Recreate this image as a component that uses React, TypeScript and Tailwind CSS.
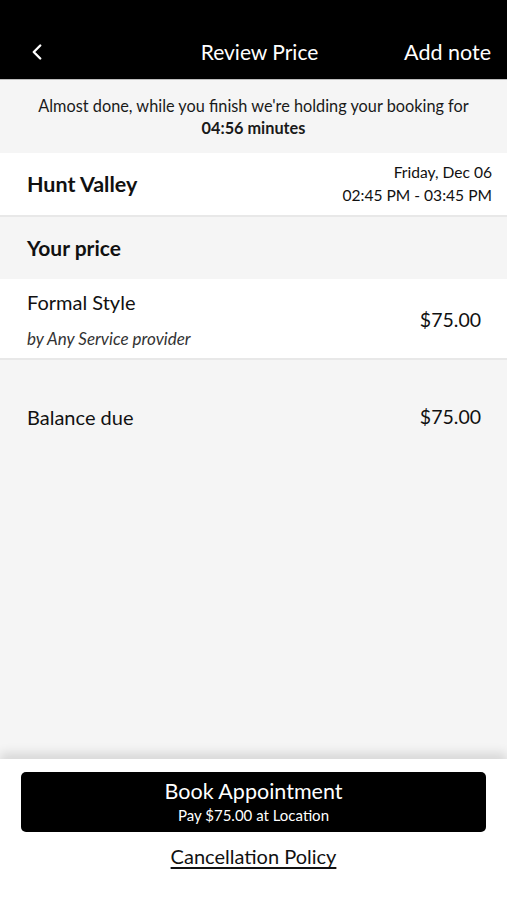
import { ChevronLeft } from "lucide-react";

const font = { fontFamily: "Lato, 'Noto Sans', sans-serif" };

export default function App() {
  return (
    <div style={font} className="w-[507px] h-[900px] flex flex-col bg-[#f5f5f5] text-[#111] overflow-hidden">
      <header className="h-[80px] bg-black text-white flex items-end pb-[14px] px-[28px] border-b border-[#bdbdbd] shrink-0">
        <div className="w-[100px]">
          <ChevronLeft className="size-[26px] -ml-[4px]" strokeWidth={2.2} />
        </div>
        <div className="flex-1 text-center text-[21px] leading-[26px]">Review Price</div>
        <div className="w-[100px] text-right text-[21.5px] leading-[26px] -mr-[12px]">Add note</div>
      </header>

      <div className="h-[73px] flex flex-col items-center justify-center text-[16.3px] leading-[22px] text-[#1a1a1a]">
        <p>Almost done, while you finish we're holding your booking for</p>
        <p className="font-bold">04:56 minutes</p>
      </div>

      <div className="h-[64px] bg-white flex items-center justify-between pl-[27px] pr-[15px] border-b-2 border-[#e8e8e8]">
        <span className="text-[21.5px] font-bold">Hunt Valley</span>
        <div className="text-right text-[15.6px] leading-[23px]">
          <p>Friday, Dec 06</p>
          <p>02:45 PM - 03:45 PM</p>
        </div>
      </div>

      <div className="h-[62px] flex items-center px-[27px]">
        <span className="text-[21px] font-bold">Your price</span>
      </div>

      <div className="h-[81px] bg-white flex items-center justify-between pl-[27px] pr-[26px] border-b-2 border-[#e8e8e8]">
        <div className="flex flex-col">
          <span className="text-[20px] leading-[26px]">Formal Style</span>
          <span className="text-[17px] italic text-[#333] mt-[14px] leading-[20px]">by Any Service provider</span>
        </div>
        <span className="text-[19.5px] mt-[2px]">$75.00</span>
      </div>

      <div className="flex items-center justify-between pl-[27px] pr-[26px] mt-[42px]">
        <span className="text-[20px]">Balance due</span>
        <span className="text-[19.5px]">$75.00</span>
      </div>

      <div className="flex-1" />

      <div className="h-[141px] bg-white shadow-[0_-6px_10px_rgba(0,0,0,0.12)] flex flex-col items-center pt-[13px] px-[21px] shrink-0">
        <button className="w-full h-[60px] bg-black text-white rounded-[5px] flex flex-col items-center justify-center">
          <span className="text-[21.5px] leading-[24px]">Book Appointment</span>
          <span className="text-[15px] leading-[20px] mt-[2px]">Pay $75.00 at Location</span>
        </button>
        <a className="mt-[9px] text-[20px] underline underline-offset-[3px]">Cancellation Policy</a>
      </div>
    </div>
  );
}
